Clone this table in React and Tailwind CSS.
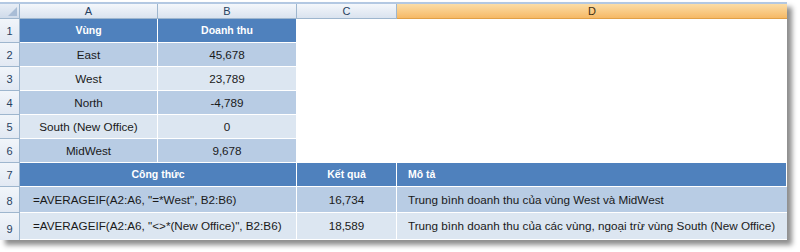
import React from 'react';

const font = { fontFamily: '"Liberation Sans", Arial, sans-serif' };

const data = [
  ['East', '45,678'],
  ['West', '23,789'],
  ['North', '-4,789'],
  ['South (New Office)', '0'],
  ['MidWest', '9,678'],
];

const formulas = [
  ['=AVERAGEIF(A2:A6, "=*West", B2:B6)', '16,734', 'Trung bình doanh thu của vùng West và MidWest'],
  ['=AVERAGEIF(A2:A6, "<>*(New Office)", B2:B6)', '18,589', 'Trung bình doanh thu của các vùng, ngoại trừ vùng South (New Office)'],
];

const colHead = 'flex items-center justify-center text-[11px] text-[#27415f] border-r border-b border-[#9eb6ce] bg-gradient-to-b from-[#f4f7fb] to-[#dae3ef]';
const rowHead = 'flex items-end justify-center pb-[3px] text-[11px] text-[#27415f] border-r border-b border-[#9eb6ce] bg-gradient-to-b from-[#f1f5fa] to-[#e2e9f3]';
const th = 'flex items-center justify-center bg-[#4f81bd] text-white font-bold text-[10.5px] border-r border-b border-white';
const band = (i) => (i % 2 === 0 ? 'bg-[#b8cce4]' : 'bg-[#dce6f1]');

export default function App() {
  return (
    <div className="w-[800px] h-[252px] bg-white pt-[2px]" style={font}>
      <div
        className="w-[787px] border-t-2 border-[#b3c8e2] grid shadow-[5px_5px_5px_rgba(0,0,0,0.45)] text-[11.7px] text-[#1a1a1a]"
        style={{ gridTemplateColumns: '20px 138px 139px 100px 390px', gridTemplateRows: '15px repeat(7, 24px) 26px 27px' }}
      >
        {/* column headers */}
        <div className="relative border-r border-b border-[#9eb6ce] bg-gradient-to-b from-[#e8eef6] to-[#cfdbea]">
          <div className="absolute right-[2px] bottom-[2px] w-0 h-0 border-l-[9px] border-l-transparent border-b-[9px] border-b-[#a9bdd6]" />
        </div>
        <div className={colHead}>A</div>
        <div className={colHead}>B</div>
        <div className={colHead}>C</div>
        <div className="flex items-center justify-center text-[11px] text-[#3d2f10] border-b border-[#e0a048] bg-gradient-to-b from-[#fbdda6] to-[#f6b965]">D</div>

        {/* row 1 */}
        <div className={rowHead}>1</div>
        <div className={th}>Vùng</div>
        <div className={th}>Doanh thu</div>
        <div className="row-span-6 col-span-2 bg-white" />

        {data.map(([region, value], i) => (
          <React.Fragment key={region}>
            <div className={rowHead}>{i + 2}</div>
            <div className={`${band(i)} flex items-center justify-center border-r border-b border-white`}>{region}</div>
            <div className={`${band(i)} flex items-center justify-center border-r border-b border-white`}>{value}</div>
          </React.Fragment>
        ))}

        {/* row 7 */}
        <div className={rowHead}>7</div>
        <div className={`${th} col-span-2`}>Công thức</div>
        <div className={th}>Kết quả</div>
        <div className={`${th} justify-start pl-[11px]`}>Mô tả</div>

        {formulas.map(([f, r, d], i) => (
          <React.Fragment key={f}>
            <div className={`${rowHead} ${i === 1 ? 'border-b-0' : ''}`}>{i + 8}</div>
            <div className={`${band(i)} col-span-2 flex items-center pl-[13px] border-r border-b border-white`}>{f}</div>
            <div className={`${band(i)} flex items-center justify-center border-r border-b border-white`}>{r}</div>
            <div className={`${band(i)} flex items-center pl-[11px] border-b border-white`}>{d}</div>
          </React.Fragment>
        ))}
      </div>
    </div>
  );
}
